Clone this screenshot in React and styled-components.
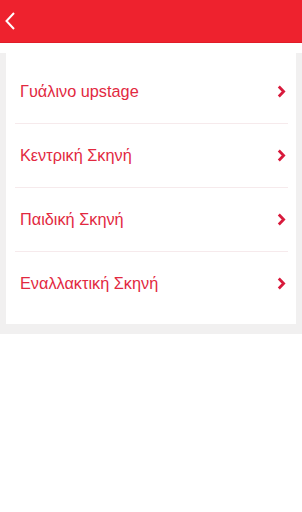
import React from 'react';
import styled, { createGlobalStyle } from 'styled-components';

const GlobalStyle = createGlobalStyle`
  html, body {
    margin: 0;
    padding: 0;
    background: #ffffff;
    font-family: "Liberation Sans", Arial, sans-serif;
  }
`;

const Header = styled.div`
  height: 43px;
  background: #ee222e;
  border-bottom: 1px solid #e01c28;
  box-sizing: border-box;
  display: flex;
  align-items: center;
  padding-left: 4px;
`;

const BackButton = styled.button`
  background: none;
  border: 0;
  padding: 0;
  display: flex;
  cursor: pointer;
`;

const Panel = styled.div`
  margin-top: 10px;
  background: #f1f0f0;
  padding: 0 6px 10px;
`;

const Card = styled.ul`
  list-style: none;
  margin: 0;
  padding: 7px 0 8px;
  background: #ffffff;
`;

const Row = styled.li`
  height: 63px;
  margin: 0 8px 0 9px;
  padding: 0 2px 0 5px;
  display: flex;
  align-items: center;
  justify-content: space-between;
  border-bottom: 1px solid ${p => (p.last ? 'transparent' : '#f6eaec')};
`;

const Label = styled.span`
  font-size: 16.3px;
  color: #e2293f;
`;

const items = ['Γυάλινο upstage', 'Κεντρική Σκηνή', 'Παιδική Σκηνή', 'Εναλλακτική Σκηνή'];

const Chevron = () => (
  <svg width="9" height="13" viewBox="0 0 9 13">
    <path d="M1.8 1.6 L6.6 6.5 L1.8 11.4" fill="none" stroke="#d81a3c" strokeWidth="2.8" />
  </svg>
);

export default function App() {
  return (
    <>
      <GlobalStyle />
      <Header>
        <BackButton aria-label="back">
          <svg width="12" height="20" viewBox="0 0 12 20">
            <path d="M10 2 L2.5 10 L10 18" fill="none" stroke="#ffffff" strokeWidth="2" />
          </svg>
        </BackButton>
      </Header>
      <Panel>
        <Card>
          {items.map((t, i) => (
            <Row key={t} last={i === items.length - 1}>
              <Label>{t}</Label>
              <Chevron />
            </Row>
          ))}
        </Card>
      </Panel>
    </>
  );
}
